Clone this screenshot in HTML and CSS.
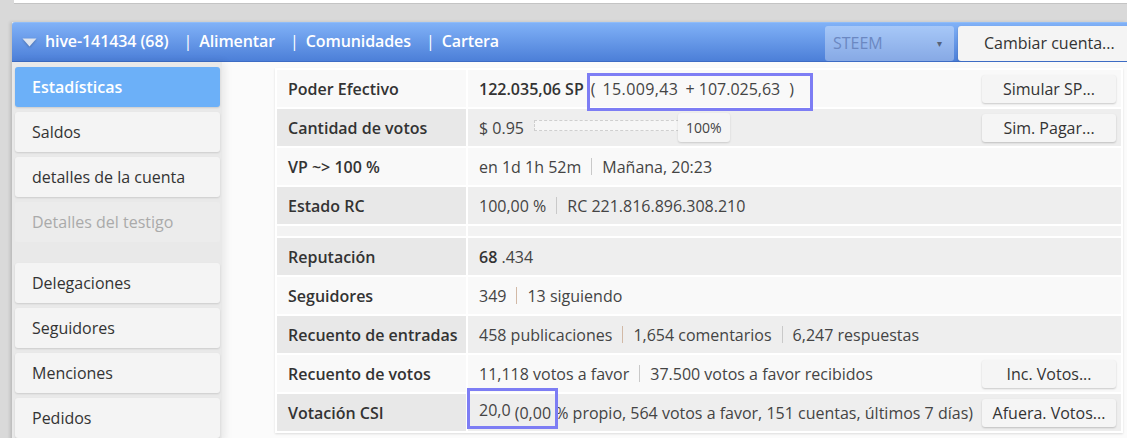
FILE: index.html
```html
<!DOCTYPE html>
<html lang="es">
<head>
<meta charset="utf-8">
<title>hive-141434 - Estadísticas</title>
<link rel="stylesheet" href="styles.css">
</head>
<body>
<div class="topcard"></div>
<div class="app">
  <header class="navbar">
    <svg class="caret" width="15" height="9" viewBox="0 0 15 9"><path d="M0.5 0.5 L14.5 0.5 L7.5 8.5 Z" fill="#dfe5ef"/></svg>
    <span class="nav-title">hive-141434 (68)</span>
    <span class="nav-sep">|</span><span class="nav-link">Alimentar</span>
    <span class="nav-sep">|</span><span class="nav-link">Comunidades</span>
    <span class="nav-sep">|</span><span class="nav-link">Cartera</span>
    <div class="nav-right">
      <div class="chain-select"><span>STEEM</span><span class="chain-arrow">▾</span></div>
      <div class="switch-btn">Cambiar cuenta...</div>
    </div>
  </header>
  <div class="layout">
    <nav class="sidebar">
      <div class="side-item active">Estadísticas</div>
      <div class="side-item">Saldos</div>
      <div class="side-item">detalles de la cuenta</div>
      <div class="side-item disabled">Detalles del testigo</div>
      <div class="side-item group-start">Delegaciones</div>
      <div class="side-item">Seguidores</div>
      <div class="side-item">Menciones</div>
      <div class="side-item">Pedidos</div>
    </nav>
    <main class="main">
      <table class="stats">
        <tr class="odd">
          <td class="label">Poder Efectivo</td>
          <td class="value"><div class="cell">
            <span class="strong">122.035,06 SP</span>
            <span class="paren-open">(</span><span class="sp-own">15.009,43</span><span class="sp-deleg">+ 107.025,63</span><span class="paren-close">)</span>
            <span class="btn">Simular SP...</span>
          </div></td>
        </tr>
        <tr class="even">
          <td class="label">Cantidad de votos</td>
          <td class="value"><div class="cell">
            <span>$ 0.95</span>
            <span class="vote-bar"></span><span class="pct-tag">100%</span>
            <span class="btn">Sim. Pagar...</span>
          </div></td>
        </tr>
        <tr class="odd">
          <td class="label">VP ~&gt; 100 %</td>
          <td class="value"><div class="cell">
            <span>en 1d 1h 52m</span><span class="sep"></span><span>Mañana, 20:23</span>
          </div></td>
        </tr>
        <tr class="even">
          <td class="label">Estado RC</td>
          <td class="value"><div class="cell">
            <span>100,00 %</span><span class="sep"></span><span>RC 221.816.896.308.210</span>
          </div></td>
        </tr>
        <tr class="spacer"><td></td><td></td></tr>
        <tr class="even">
          <td class="label">Reputación</td>
          <td class="value"><div class="cell">
            <span><span class="strong">68</span> .434</span>
          </div></td>
        </tr>
        <tr class="odd">
          <td class="label">Seguidores</td>
          <td class="value"><div class="cell">
            <span>349</span><span class="sep warm"></span><span>13 siguiendo</span>
          </div></td>
        </tr>
        <tr class="even">
          <td class="label">Recuento de entradas</td>
          <td class="value"><div class="cell">
            <span>458 publicaciones</span><span class="sep warm"></span><span>1,654 comentarios</span><span class="sep"></span><span>6,247 respuestas</span>
          </div></td>
        </tr>
        <tr class="odd">
          <td class="label">Recuento de votos</td>
          <td class="value"><div class="cell">
            <span>11,118 votos a favor</span><span class="sep"></span><span>37.500 votos a favor recibidos</span>
            <span class="btn">Inc. Votos...</span>
          </div></td>
        </tr>
        <tr class="even">
          <td class="label">Votación CSI</td>
          <td class="value"><div class="cell">
            <span><span class="csi">20,0</span> (0,00 % propio, 564 votos a favor, 151 cuentas, últimos 7 días)</span>
            <span class="btn">Afuera. Votos...</span>
          </div></td>
        </tr>
      </table>
      <div class="mark mark-sp"></div>
      <div class="mark mark-csi"></div>
    </main>
  </div>
</div>
</body>
</html>
```

FILE: styles.css
```css
* { box-sizing: border-box; }

html, body {
  margin: 0;
  padding: 0;
  height: 438px;
  overflow: hidden;
}

body {
  background: #d9d9d9;
  font-family: "Open Sans", "DejaVu Sans", sans-serif;
  font-size: 16px;
  color: #333;
}

.topcard {
  height: 4px;
  margin-left: 14px;
  background: #fff;
  border-bottom: 1px solid #c4c4c4;
  margin-bottom: 18px;
}

.app {
  margin-left: 12px;
  box-shadow: -2px 0 3px rgba(0, 0, 0, 0.12);
  background: #e9e9e9;
}

/* top navigation bar */
.navbar {
  height: 40px;
  display: flex;
  align-items: center;
  padding-left: 10px;
  padding-bottom: 3px;
  background: linear-gradient(#80b1f7, #4c7fd8);
  border-top: 1px solid #8fbcf8;
  border-bottom: 1px solid #3d6cc4;
  border-top-left-radius: 3px;
  color: #fff;
  overflow: hidden;
}

.caret {
  margin-top: 3px;
  filter: drop-shadow(0 1px 1px rgba(0, 0, 0, 0.25));
}

.nav-title {
  font-weight: 600;
  margin-left: 8px;
  letter-spacing: -0.1px;
}

.nav-sep {
  margin: 0 7px 0 15px;
  font-weight: 400;
}

.nav-link {
  font-weight: 600;
  letter-spacing: -0.1px;
}

.nav-right {
  margin-left: auto;
  display: flex;
  align-items: center;
  gap: 4px;
  height: 100%;
  margin-bottom: -3px;
}

.chain-select {
  width: 129px;
  height: 35px;
  margin-top: 2px;
  border-radius: 3px;
  background: rgba(255, 255, 255, 0.33);
  display: flex;
  align-items: center;
  justify-content: space-between;
  padding: 0 12px 0 8px;
  color: #6b88c2;
}

.chain-arrow {
  font-size: 10px;
  color: #55627a;
}

.switch-btn {
  width: 169px;
  height: 35px;
  margin-top: 2px;
  border-radius: 3px 0 0 3px;
  background: #f4f4f4;
  color: #333;
  display: flex;
  align-items: center;
  padding-left: 26px;
  box-shadow: 0 1px 2px rgba(0, 0, 0, 0.2);
}

/* page body */
.layout {
  display: flex;
  height: 380px;
}

.sidebar {
  width: 210px;
  flex: none;
  padding: 5px 2px 0 3px;
  display: flex;
  flex-direction: column;
  gap: 5px;
  background: #e9e9e9;
  box-shadow: 3px 0 8px rgba(0, 0, 0, 0.08);
  position: relative;
  z-index: 1;
}

.side-item {
  height: 40px;
  flex: none;
  border-radius: 3px;
  background: #f4f4f4;
  box-shadow: 0 1px 2px rgba(0, 0, 0, 0.13);
  display: flex;
  align-items: center;
  padding-left: 17px;
  padding-bottom: 1px;
  color: #333;
}

.side-item.active {
  background: #6cb0f8;
  color: #fff;
  font-weight: 600;
}

.side-item.disabled {
  background: #ececec;
  color: #aaa;
  box-shadow: none;
}

.side-item.group-start {
  margin-top: 16px;
}

.main {
  flex: 1;
  position: relative;
  background: #fbfbfb;
  padding: 6px 0 0 53px;
}

/* statistics table */
.stats {
  width: 848px;
  border-collapse: separate;
  border-spacing: 2px;
  background: #fff;
  box-shadow: 0 1px 2px rgba(0, 0, 0, 0.12);
}

.stats td {
  height: 37px;
  padding: 0;
  vertical-align: middle;
}

.stats .label {
  width: 189px;
  padding-left: 11px;
  font-weight: 600;
  color: #333;
}

.stats .value {
  padding-left: 11px;
  color: #444;
}

.odd td { background: #f9f9f9; }
.even .label { background: #e8e8e8; }
.even .value { background: #eeeeee; }

.stats .spacer td {
  height: 10px;
  background: #f3f3f3;
}

.cell {
  display: flex;
  align-items: center;
  height: 37px;
  white-space: nowrap;
}

.strong { font-weight: 600; color: #333; }

.paren-open { margin-left: 7px; color: #444; }
.sp-own { margin-left: 7px; letter-spacing: 0.4px; }
.sp-deleg { margin-left: 7px; }
.paren-close { margin-left: 9px; }

.sep {
  width: 1px;
  height: 17px;
  background: #c9c9c9;
  margin: 0 10px;
}

.sep.warm { background: #d2b9a6; }

.vote-bar {
  width: 145px;
  height: 11px;
  margin-left: 10px;
  margin-top: -5px;
  border: 1px dashed #cfcfcf;
  background: #f6f6f6;
}

.pct-tag {
  height: 29px;
  margin-left: -1px;
  padding: 0 8px;
  display: flex;
  align-items: center;
  font-size: 14px;
  color: #444;
  background: #f5f5f5;
  border-radius: 3px;
  box-shadow: 0 1px 2px rgba(0, 0, 0, 0.15);
}

.csi {
  position: relative;
  top: -3px;
}

.btn {
  margin-left: auto;
  margin-right: 5px;
  width: 134px;
  height: 28px;
  flex: none;
  display: flex;
  align-items: center;
  justify-content: center;
  background: #f5f5f5;
  color: #333;
  border-radius: 3px;
  box-shadow: 0 1px 2px rgba(0, 0, 0, 0.2);
}

/* highlight frames drawn over the values */
.mark {
  position: absolute;
  border: 3px solid #7d7df4;
  pointer-events: none;
}

.mark-sp {
  left: 365px;
  top: 11px;
  width: 226px;
  height: 38px;
}

.mark-csi {
  left: 245px;
  top: 326px;
  width: 91px;
  height: 41px;
}
```
